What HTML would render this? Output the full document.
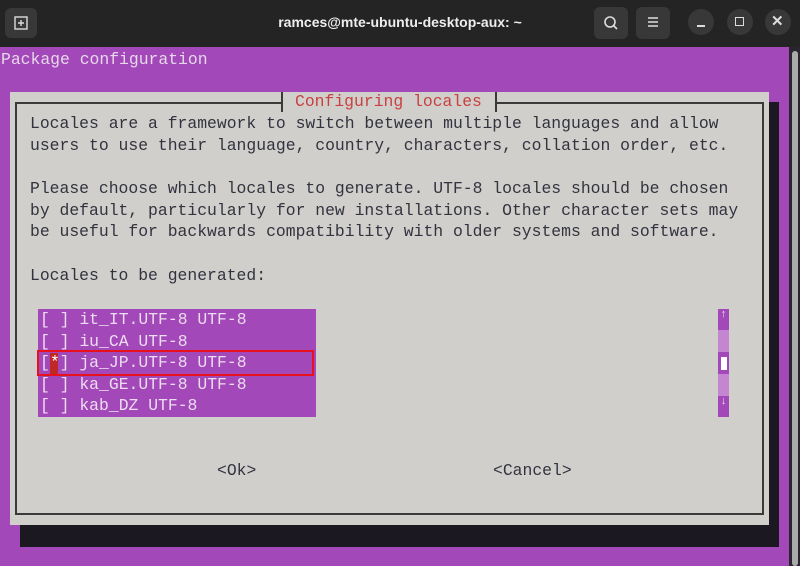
<!DOCTYPE html>
<html><head><meta charset="utf-8"><style>
*{margin:0;padding:0;box-sizing:border-box}
body{width:800px;height:566px;overflow:hidden;background:#a348b8;position:relative;font-family:"Liberation Mono","DejaVu Sans Mono",monospace;}
.t{position:absolute;font-size:16.4px;line-height:21.5px;white-space:pre;color:#33333f}
#bar{position:absolute;left:0;top:0;width:800px;height:47px;background:#242424}
.btn{position:absolute;background:#383838;border-radius:6px}
.cb{position:absolute;width:26px;height:26px;border-radius:13px;background:#383838;top:9px}
</style></head><body>
<div id="bar">
<div class="btn" style="left:5px;top:8px;width:32px;height:30px"></div>
<svg style="position:absolute;left:14px;top:16px" width="14" height="14"><rect x="1" y="1" width="12" height="12" fill="none" stroke="#ddd" stroke-width="1.4"/><path d="M7 4v6M4 7h6" stroke="#ddd" stroke-width="1.4"/></svg>
<div style="position:absolute;left:0;width:800px;top:14px;text-align:center;color:#eee;font:bold 14px 'Liberation Sans',sans-serif">ramces@mte-ubuntu-desktop-aux: ~</div>
<div class="btn" style="left:594px;top:7px;width:34px;height:32px"></div>
<svg style="position:absolute;left:603px;top:15px" width="16" height="16"><circle cx="7" cy="7" r="5" fill="none" stroke="#ddd" stroke-width="1.6"/><path d="M10.5 10.5L14 14" stroke="#ddd" stroke-width="1.6"/></svg>
<div class="btn" style="left:636px;top:7px;width:34px;height:32px"></div>
<svg style="position:absolute;left:647px;top:16px" width="12" height="12"><path d="M1 2h10M1 6h10M1 10h10" stroke="#ddd" stroke-width="1.5"/></svg>
<div class="cb" style="left:688px"></div><div style="position:absolute;left:697px;top:25px;width:8px;height:2px;background:#ddd"></div>
<div class="cb" style="left:727px"></div><div style="position:absolute;left:735px;top:17px;width:9px;height:9px;border:1.5px solid #ddd"></div>
<div class="cb" style="left:765px"></div><div style="position:absolute;left:771px;top:12px;color:#ddd;font:bold 15px 'Liberation Sans',sans-serif">✕</div>
</div>
<div style="position:absolute;left:789px;top:47px;width:11px;height:519px;background:#2a2430"></div>
<div style="position:absolute;left:792px;top:51px;width:6px;height:515px;background:#aaa;border-radius:3px"></div>
<div class="t" style="left:1px;top:49px;color:#e6d8ea">Package configuration</div>
<div style="position:absolute;left:20px;top:102px;width:759px;height:445px;background:#1c1822"></div>
<div style="position:absolute;left:10px;top:92px;width:759px;height:433px;background:#d0cfcb"></div>
<div style="position:absolute;left:15px;top:102px;width:749px;height:413px;border:2px solid #3a3a3a"></div>
<div style="position:absolute;left:281px;top:92px;width:216px;height:20px;background:#d0cfcb;border-left:2px solid #3a3a3a;border-right:2px solid #3a3a3a"></div>
<div class="t" style="left:295px;top:91px;color:#c94040">Configuring locales</div>
<div class="t" style="left:30px;top:113px">Locales are a framework to switch between multiple languages and allow
users to use their language, country, characters, collation order, etc.</div>
<div class="t" style="left:30px;top:178px">Please choose which locales to generate. UTF-8 locales should be chosen
by default, particularly for new installations. Other character sets may
be useful for backwards compatibility with older systems and software.</div>
<div class="t" style="left:30px;top:265px">Locales to be generated:</div>
<div style="position:absolute;left:38px;top:309px;width:278px;height:108px;background:#a348b8"></div>
<div class="t" style="left:40px;top:309px;color:#ecdcef;line-height:21.5px">[ ] it_IT.UTF-8 UTF-8
[ ] iu_CA UTF-8
[ ] ja_JP.UTF-8 UTF-8
[ ] ka_GE.UTF-8 UTF-8
[ ] kab_DZ UTF-8</div>
<div style="position:absolute;left:50px;top:353px;width:8px;height:21px;background:#c02828"></div>
<div class="t" style="left:50px;top:352px;color:#fff;line-height:21px">*</div>
<div style="position:absolute;left:37px;top:350px;width:277px;height:26px;border:2.5px solid #e8101c"></div>
<div style="position:absolute;left:718px;top:309px;width:11px;height:108px;background:#c486d0"></div>
<div style="position:absolute;left:718px;top:309px;width:11px;height:21px;background:#a348b8;color:#ecdcef;font-size:11px;text-align:center">↑</div>
<div style="position:absolute;left:718px;top:352px;width:11px;height:22px;background:#a348b8"></div>
<div style="position:absolute;left:721px;top:357px;width:6px;height:13px;background:#fff"></div>
<div style="position:absolute;left:718px;top:396px;width:11px;height:21px;background:#a348b8;color:#ecdcef;font-size:11px;text-align:center">↓</div>
<div class="t" style="left:217px;top:460px">&lt;Ok&gt;</div>
<div class="t" style="left:493px;top:460px">&lt;Cancel&gt;</div>
</body></html>
